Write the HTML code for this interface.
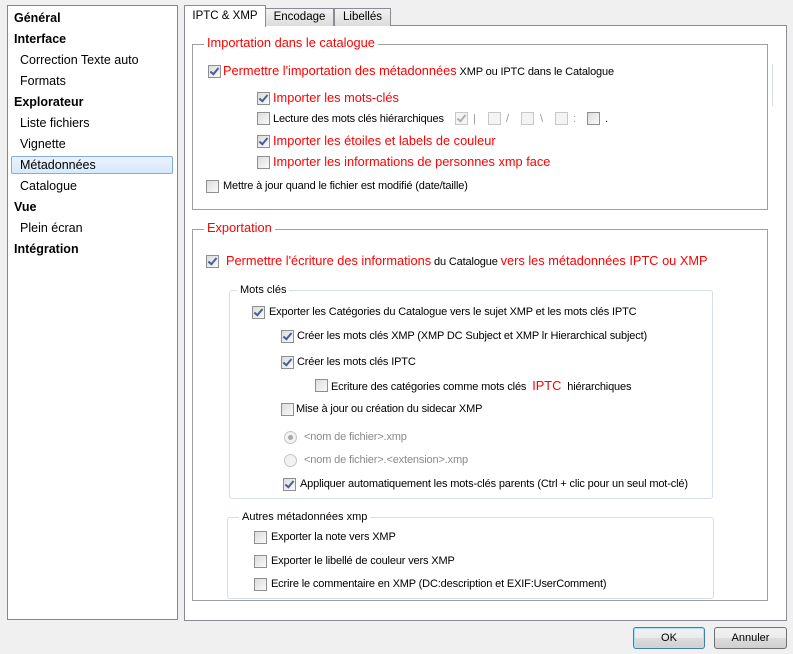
<!DOCTYPE html>
<html><head><meta charset="utf-8"><style>
body{margin:0;width:793px;height:654px;background:#f0f0f0;font-family:"Liberation Sans",sans-serif;font-size:11px;color:#000;position:relative;overflow:hidden}
.a{position:absolute;white-space:nowrap;line-height:14px;letter-spacing:-0.15px}
.r{color:#f00;font-size:12.8px;line-height:16px;letter-spacing:0}
.cb{position:absolute;width:11px;height:11px;border:1px solid #8e8f8f;background:linear-gradient(135deg,#dcdcdc,#fafafa)}
.cb.c::after{content:"";position:absolute;left:3px;top:0px;width:3px;height:7px;border:solid #4a5d9c;border-width:0 2px 2px 0;transform:rotate(40deg)}
.cb.g{border-color:#c8c8c8;background:#f4f4f4}
.cb.g.c::after{border-color:#b0b0b0}
.box{position:absolute;border:1px solid #a0a0a0}
.sbox{position:absolute;border:1px solid #d5dfe5;border-radius:3px}
.leg{position:absolute;background:#fff;padding:0 3px;line-height:14px}
.rad{position:absolute;width:11px;height:11px;border:1px solid #c5c5c5;border-radius:50%;background:#f2f2f2}
.btn{position:absolute;height:20px;border:1px solid #707070;border-radius:3px;background:linear-gradient(#f2f2f2,#ebebeb 50%,#dddddd 50%,#cfcfcf);text-align:center;line-height:20px}
.side{position:absolute;left:14px;line-height:14px;font-size:12.5px;white-space:nowrap}
.b{font-weight:bold;font-size:12.5px}
.s{left:20px}
</style></head><body>
<div style="position:absolute;left:7px;top:5px;width:169px;height:613px;border:1px solid #828790;background:#fff"></div>
<div style="position:absolute;left:11px;top:156px;width:160px;height:16px;border:1px solid #84acdd;border-radius:2px;background:linear-gradient(#eaf3fd,#d6e8fb)"></div>
<div class="side b" style="top:11px">Général</div>
<div class="side b" style="top:32px">Interface</div>
<div class="side s" style="top:53px">Correction Texte auto</div>
<div class="side s" style="top:74px">Formats</div>
<div class="side b" style="top:95px">Explorateur</div>
<div class="side s" style="top:116px">Liste fichiers</div>
<div class="side s" style="top:137px">Vignette</div>
<div class="side s" style="top:158px">Métadonnées</div>
<div class="side s" style="top:179px">Catalogue</div>
<div class="side b" style="top:200px">Vue</div>
<div class="side s" style="top:221px">Plein écran</div>
<div class="side b" style="top:242px">Intégration</div>

<div style="position:absolute;left:184px;top:25px;width:601px;height:594px;border:1px solid #898c95;background:#fff"></div>
<div style="position:absolute;left:265px;top:8px;width:67px;height:17px;border:1px solid #898c95;border-bottom:none;background:linear-gradient(#f2f2f2,#dcdcdc);text-align:center;line-height:17px;font-size:11.5px">Encodage</div>
<div style="position:absolute;left:334px;top:8px;width:55px;height:17px;border:1px solid #898c95;border-bottom:none;background:linear-gradient(#f2f2f2,#dcdcdc);text-align:center;line-height:17px;font-size:11.5px">Libellés</div>
<div style="position:absolute;left:184px;top:5px;width:80px;height:21px;border:1px solid #898c95;border-bottom:none;background:#fff;text-align:center;line-height:20px;font-size:11.5px">IPTC &amp; XMP</div>
<div style="position:absolute;left:772px;top:64px;width:1px;height:42px;background:#d5dfe5"></div>

<div class="box" style="left:192px;top:44px;width:574px;height:164px"></div>
<div class="leg r" style="left:204px;top:36px">Importation dans le catalogue</div>
<div class="cb c" style="left:208px;top:65px"></div>
<div class="a" style="left:223px;top:63px"><span class="r">Permettre l'importation des métadonnées</span> XMP ou IPTC dans le Catalogue</div>
<div class="cb c" style="left:257px;top:92px"></div>
<div class="a r" style="left:273px;top:90px">Importer les mots-clés</div>
<div class="cb" style="left:257px;top:112px"></div>
<div class="a" style="left:273px;top:112px">Lecture des mots clés hiérarchiques</div>
<div class="cb g c" style="left:455px;top:112px"></div><div class="a" style="left:473px;top:112px;color:#999">|</div>
<div class="cb g" style="left:488px;top:112px"></div><div class="a" style="left:506px;top:112px;color:#999">/</div>
<div class="cb g" style="left:521px;top:112px"></div><div class="a" style="left:540px;top:112px;color:#999">\</div>
<div class="cb g" style="left:555px;top:112px"></div><div class="a" style="left:573px;top:112px;color:#999">:</div>
<div class="cb" style="left:587px;top:112px"></div><div class="a" style="left:605px;top:112px">.</div>
<div class="cb c" style="left:257px;top:135px"></div>
<div class="a r" style="left:273px;top:133px">Importer les étoiles et labels de couleur</div>
<div class="cb" style="left:257px;top:156px"></div>
<div class="a r" style="left:273px;top:154px">Importer les informations de personnes xmp face</div>
<div class="cb" style="left:206px;top:180px"></div>
<div class="a" style="left:223px;top:179px">Mettre à jour quand le fichier est modifié (date/taille)</div>

<div class="box" style="left:192px;top:229px;width:574px;height:370px"></div>
<div class="leg r" style="left:204px;top:221px">Exportation</div>
<div class="cb c" style="left:206px;top:255px"></div>
<div class="a" style="left:226px;top:253px"><span class="r">Permettre l'écriture des informations</span> du Catalogue <span class="r">vers les métadonnées IPTC ou XMP</span></div>

<div class="sbox" style="left:229px;top:290px;width:482px;height:207px"></div>
<div class="leg" style="left:237px;top:283px">Mots clés</div>
<div class="cb c" style="left:252px;top:306px"></div>
<div class="a" style="left:269px;top:305px">Exporter les Catégories du Catalogue vers le sujet XMP et les mots clés IPTC</div>
<div class="cb c" style="left:281px;top:330px"></div>
<div class="a" style="left:297px;top:329px">Créer les mots clés XMP (XMP DC Subject et XMP lr Hierarchical subject)</div>
<div class="cb c" style="left:281px;top:356px"></div>
<div class="a" style="left:297px;top:355px">Créer les mots clés IPTC</div>
<div class="cb" style="left:315px;top:379px"></div>
<div class="a" style="left:331px;top:378px">Ecriture des catégories comme mots clés <span class="r" style="margin:0 3px">IPTC</span> hiérarchiques</div>
<div class="cb" style="left:281px;top:403px"></div>
<div class="a" style="left:296px;top:402px">Mise à jour ou création du sidecar XMP</div>
<div class="rad" style="left:284px;top:431px"><div style="position:absolute;left:3px;top:3px;width:5px;height:5px;border-radius:50%;background:#aaa"></div></div>
<div class="a" style="left:304px;top:430px;color:#8a8a8a">&lt;nom de fichier&gt;.xmp</div>
<div class="rad" style="left:284px;top:454px"></div>
<div class="a" style="left:304px;top:453px;color:#8a8a8a">&lt;nom de fichier&gt;.&lt;extension&gt;.xmp</div>
<div class="cb c" style="left:283px;top:478px"></div>
<div class="a" style="left:300px;top:477px">Appliquer automatiquement les mots-clés parents (Ctrl + clic pour un seul mot-clé)</div>

<div class="sbox" style="left:227px;top:517px;width:485px;height:80px"></div>
<div class="leg" style="left:239px;top:510px">Autres métadonnées xmp</div>
<div class="cb" style="left:254px;top:531px"></div>
<div class="a" style="left:271px;top:530px">Exporter la note vers XMP</div>
<div class="cb" style="left:254px;top:555px"></div>
<div class="a" style="left:271px;top:554px">Exporter le libellé de couleur vers XMP</div>
<div class="cb" style="left:254px;top:578px"></div>
<div class="a" style="left:271px;top:577px">Ecrire le commentaire en XMP (DC:description et EXIF:UserComment)</div>

<div class="btn" style="left:633px;top:627px;width:70px;border-color:#3c7fb1;box-shadow:inset 0 0 0 1px #aee0f8">OK</div>
<div class="btn" style="left:714px;top:627px;width:71px">Annuler</div>
</body></html>
